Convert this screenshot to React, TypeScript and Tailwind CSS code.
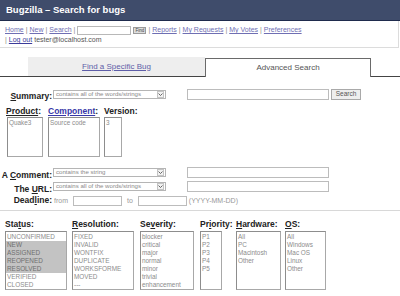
import React from 'react';

const link = 'text-[#6f6fb3] underline';

const Select = ({ text, w }: { text: string; w: string }) => (
  <div className={`${w} h-[9px] border border-[#b5b5b5] bg-white flex items-center`}>
    <span className="flex-1 pl-[2px] text-[6.1px] leading-none text-[#8a8a8a] whitespace-nowrap overflow-hidden">{text}</span>
    <div className="w-[7px] h-[7px] mr-[1px] border border-[#c4c4c4] bg-[#f2f2f2] flex items-center justify-center">
      <svg width="5" height="3" viewBox="0 0 5 3">
        <path d="M0.5 0.5 L2.5 2.5 L4.5 0.5" stroke="#555" strokeWidth="0.9" fill="none" />
      </svg>
    </div>
  </div>
);

const ListBox = ({ items, w, h, selected = [] }: { items: string[]; w: string; h: string; selected?: string[] }) => (
  <div className={`${w} ${h} border border-[#a8a8a8] border-t-[#8d8d8d] border-l-[#8d8d8d] bg-white pt-px overflow-hidden`}>
    {items.map((it) => (
      <div
        key={it}
        className={`h-[8px] pl-[1px] text-[6.4px] leading-[8px] whitespace-nowrap ${
          selected.includes(it) ? 'bg-[#c3c3c3] text-[#6f6f6f]' : 'text-[#8c8c8c]'
        }`}
      >
        {it}
      </div>
    ))}
  </div>
);

const Label = ({ children }: { children: React.ReactNode }) => (
  <span className="text-[8.5px] font-bold text-[#222] leading-[10px] whitespace-nowrap">{children}</span>
);

export default function App() {
  return (
    <div className="w-[400px] h-[296px] overflow-hidden bg-white font-['Liberation_Sans',Arial,sans-serif]">
      {/* title bar */}
      <div className="h-[21px] bg-[#3f4c6b] border-b border-[#1f2b4d] px-[6px] flex items-center">
        <span className="text-white font-bold text-[9.5px] leading-none">Bugzilla – Search for bugs</span>
      </div>

      {/* links box */}
      <div className="w-[399px] border-r border-b border-[#dcdcdc] pl-[5px] pt-[5px] pb-[2px] text-[7px] text-[#888]">
        <div className="h-[9px] flex items-center whitespace-nowrap">
          <span className={link}>Home</span>
          <span className="mx-[2px]">|</span>
          <span className={link}>New</span>
          <span className="mx-[2px]">|</span>
          <span className={link}>Search</span>
          <span className="mx-[2px]">|</span>
          <div className="w-[54px] h-[9px] border border-[#b8b8b8] bg-white" />
          <div className="ml-[2px] w-[13px] h-[7px] border border-[#9a9a9a] bg-[#dedede] text-[4.5px] leading-[5px] text-center text-[#444]">Find</div>
          <span className="mx-[2px]">|</span>
          <span className={link}>Reports</span>
          <span className="mx-[2px]">|</span>
          <span className={link}>My Requests</span>
          <span className="mx-[2px]">|</span>
          <span className={link}>My Votes</span>
          <span className="mx-[2px]">|</span>
          <span className={link}>Preferences</span>
        </div>
        <div className="h-[9px] mt-[1px] flex items-center whitespace-nowrap text-[7px]">
          <span className="mr-[2px]">|</span>
          <span className="text-[#3b3b9a] underline">Log out</span>
          <span className="ml-[2px] text-[#555]">tester@localhost.com</span>
        </div>
      </div>

      {/* tabs */}
      <div className="mt-[9px] flex items-end h-[20px]">
        <div className="w-[28px] h-full border-b border-[#444]" />
        <div className="w-[177px] h-full bg-[#eeeeee] border-b border-[#444] flex items-center justify-center">
          <span className="text-[8px] text-[#5e5ea8] underline">Find a Specific Bug</span>
        </div>
        <div className="w-[166px] h-[19px] border border-b-0 border-[#6a6a6a] bg-white flex items-center justify-center">
          <span className="text-[8px] text-[#555]">Advanced Search</span>
        </div>
        <div className="flex-1 h-full border-b border-[#444]" />
      </div>

      {/* summary */}
      <div className="mt-[11px] h-[12px] flex items-center">
        <div className="w-[53px] text-right pr-[1px]">
          <Label><span className="underline">S</span>ummary:</Label>
        </div>
        <Select text="contains all of the words/strings" w="w-[113px]" />
        <div className="ml-[21px] w-[142px] h-[11px] border border-[#bcbcbc] bg-white" />
        <div className="ml-[2px] w-[30px] h-[11px] border border-[#a9a9a9] bg-[#eeeeee] flex items-center justify-center text-[6.5px] text-[#555]">Search</div>
      </div>

      {/* product / component / version */}
      <div className="mt-[6px] flex pl-[6px]">
        <div className="w-[42px] flex flex-col">
          <Label><span className="underline">Product</span>:</Label>
          <div className="mt-[1px] ml-px">
            <ListBox items={['Quake3']} w="w-[36px]" h="h-[40px]" />
          </div>
        </div>
        <div className="w-[56px] flex flex-col">
          <Label><span className="text-[#3737a8] underline">Component</span>:</Label>
          <div className="mt-[1px]">
            <ListBox items={['Source code']} w="w-[52px]" h="h-[40px]" />
          </div>
        </div>
        <div className="flex flex-col">
          <Label>Version:</Label>
          <div className="mt-[1px]">
            <ListBox items={['3']} w="w-[18px]" h="h-[40px]" />
          </div>
        </div>
      </div>

      {/* comment */}
      <div className="mt-[10px] h-[11px] flex items-center">
        <div className="w-[53px] text-right pr-[1px]">
          <Label>A <span className="underline">C</span>omment:</Label>
        </div>
        <Select text="contains the string" w="w-[113px]" />
        <div className="ml-[21px] w-[142px] h-[11px] border border-[#bcbcbc] bg-white" />
      </div>

      {/* url */}
      <div className="mt-[3px] h-[11px] flex items-center">
        <div className="w-[53px] text-right pr-[1px]">
          <Label>The <span className="underline">U</span>RL:</Label>
        </div>
        <Select text="contains all of the words/strings" w="w-[113px]" />
        <div className="ml-[21px] w-[142px] h-[11px] border border-[#bcbcbc] bg-white" />
      </div>

      {/* deadline */}
      <div className="mt-[4px] h-[10px] flex items-center text-[7px] text-[#999]">
        <div className="w-[53px] text-right pr-[1px]">
          <Label>Dead<span className="underline">l</span>ine:</Label>
        </div>
        <span className="ml-[1px]">from</span>
        <div className="ml-[5px] w-[49px] h-[10px] border border-[#bcbcbc] bg-white" />
        <span className="ml-[5px]">to</span>
        <div className="ml-[5px] w-[49px] h-[10px] border border-[#bcbcbc] bg-white" />
        <span className="ml-[2px]">(YYYY-MM-DD)</span>
      </div>

      <div className="mt-[4px] border-t border-[#d8d8d8]" />

      {/* bottom lists */}
      <div className="mt-[8px] flex pl-[5px]">
        <div className="w-[67px] flex flex-col">
          <Label>Sta<span className="underline">t</span>us:</Label>
          <div className="mt-[2px]">
            <ListBox
              items={['UNCONFIRMED', 'NEW', 'ASSIGNED', 'REOPENED', 'RESOLVED', 'VERIFIED', 'CLOSED']}
              selected={['NEW', 'ASSIGNED', 'REOPENED', 'RESOLVED']}
              w="w-[62px]"
              h="h-[59px]"
            />
          </div>
        </div>
        <div className="w-[68px] flex flex-col">
          <Label><span className="underline">R</span>esolution:</Label>
          <div className="mt-[2px]">
            <ListBox
              items={['FIXED', 'INVALID', 'WONTFIX', 'DUPLICATE', 'WORKSFORME', 'MOVED', '---']}
              w="w-[62px]"
              h="h-[59px]"
            />
          </div>
        </div>
        <div className="w-[60px] flex flex-col">
          <Label>Se<span className="underline">v</span>erity:</Label>
          <div className="mt-[2px]">
            <ListBox
              items={['blocker', 'critical', 'major', 'normal', 'minor', 'trivial', 'enhancement']}
              w="w-[54px]"
              h="h-[59px]"
            />
          </div>
        </div>
        <div className="w-[36px] flex flex-col">
          <Label>Pr<span className="underline">i</span>ority:</Label>
          <div className="mt-[2px]">
            <ListBox items={['P1', 'P2', 'P3', 'P4', 'P5']} w="w-[22px]" h="h-[59px]" />
          </div>
        </div>
        <div className="w-[49px] flex flex-col">
          <Label><span className="underline">H</span>ardware:</Label>
          <div className="mt-[2px]">
            <ListBox items={['All', 'PC', 'Macintosh', 'Other']} w="w-[45px]" h="h-[59px]" />
          </div>
        </div>
        <div className="flex flex-col">
          <Label><span className="underline">O</span>S:</Label>
          <div className="mt-[2px]">
            <ListBox items={['All', 'Windows', 'Mac OS', 'Linux', 'Other']} w="w-[41px]" h="h-[59px]" />
          </div>
        </div>
      </div>
    </div>
  );
}
